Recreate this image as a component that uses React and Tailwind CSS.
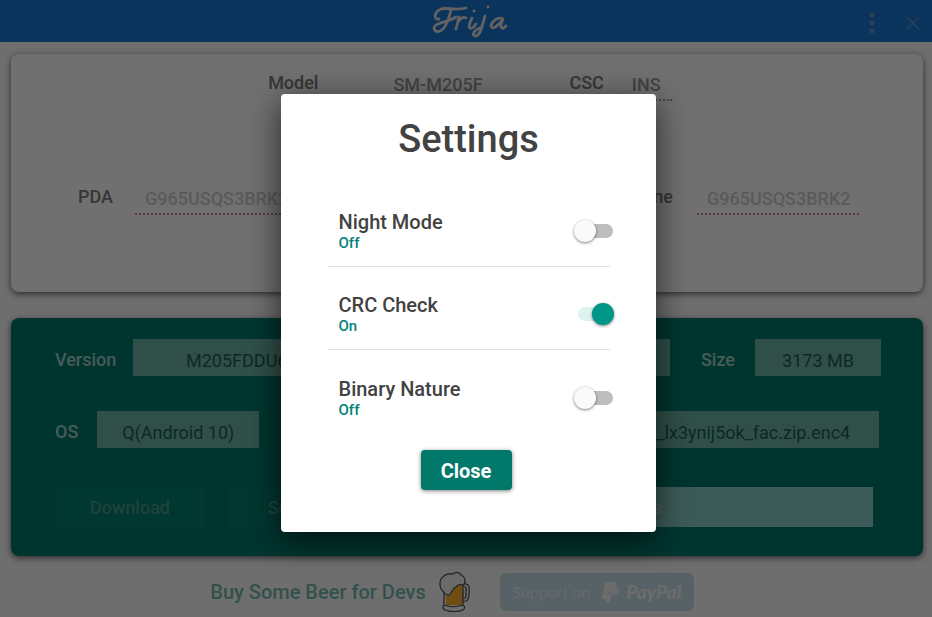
import { useState } from "react";

function Field({ id, label, value, className = "", inputClass, labelClass = "", ...rest }) {
  return (
    <div className={"flex items-center " + className}>
      <label htmlFor={id} className={"text-lg font-medium " + labelClass}>{label}</label>
      <input id={id} defaultValue={value} className={"min-w-0 text-lg outline-none " + inputClass} {...rest} />
    </div>
  );
}

const dashed = "h-9 border-b-2 border-dotted bg-transparent pt-1 font-medium";
const box = "h-[37px] bg-[#6db4a6] pt-1.5 text-center text-[#1c5f55]";

function Setting({ id, title, on, onToggle, last }) {
  return (
    <div className={"flex h-[83px] items-center justify-between pt-3 pl-[11px] " + (last ? "" : "border-b border-[#e0e0e0]")}>
      <label htmlFor={id} className="flex flex-col text-xl leading-6 font-medium text-[#424242]">
        {title}
        <span className="text-[15px] leading-[18px] text-[#00847a]">{on ? "On" : "Off"}</span>
      </label>
      <span className="relative -mr-1 h-[22px] w-10">
        <input id={id} type="checkbox" role="switch" checked={on} onChange={onToggle} className="peer absolute inset-0 z-10 cursor-pointer opacity-0" />
        <span className="absolute top-1 left-1 h-[14px] w-[35px] rounded-full bg-[#bdbdbd] peer-checked:bg-[#dcf3ef]" />
        <span className="absolute top-0 left-0 size-[22px] rounded-full bg-[#fafafa] shadow-[0_1px_3px_rgba(0,0,0,0.5)] peer-checked:left-[18px] peer-checked:bg-[#009688]" />
      </span>
    </div>
  );
}

function Logo() {
  return (
    <svg viewBox="0 0 84 38" className="h-[38px] w-[84px]" fill="none" stroke="#e0e0e0" strokeWidth="2.8" strokeLinecap="round" strokeLinejoin="round" aria-label="Frija" role="img">
      <path d="M11 17C5 18 6 10 13 7C19 5 28 9 38 6M23 8C21 16 18 27 12 29C7 31 4 26 8 23C12 20 20 20 28 15" />
      <path d="M31 15L28 27M30 20C32 17 35 14 38 16M44 16C42 20 40 25 42 26C44 27 46 25 48 22M46 9V9.2M57 14C54 23 53 33 48 34C43 34 45 28 54 25M60 5V5.2" />
      <path d="M75 17C70 14 63 20 63 24C64 29 71 23 75 17C73 21 72 25 74 26C76 27 77 25 78 24" />
    </svg>
  );
}

function Beer() {
  return (
    <svg viewBox="0 0 36 42" className="h-[42px] w-9" fill="none" stroke="#4a4a55" strokeWidth="1.2" strokeLinejoin="round">
      <path d="M26 13C33 12 31 19 31 23C31 29 29 31 25 30M26 16C29 15 28 19 28 22C28 26 28 28 25 27" fill="#f0f0f0" />
      <path d="M8 14H25V34H8Z" fill="#fbb12b" stroke="none" />
      <path d="M6 18V34C4 35 5 38 7 39C12 41 21 41 25 39C27 38 27 35 25 34V12M6 34C11 36 19 36 25 34" />
      <path d="M5 20C1 17 1 8 5 6C8 2 13 3 15 3C18 0 22 2 23 4C28 6 28 12 25 14C21 13 19 14 18 16C14 17 13 25 10 24C7 24 6 22 5 20Z" fill="#f2f2f2" />
    </svg>
  );
}

export default function App() {
  const [settings, setSettings] = useState({ night: false, crc: true, binary: false });
  const toggle = (key) => () => setSettings((s) => ({ ...s, [key]: !s[key] }));
  const card = "h-[238px] rounded-lg shadow-[0_2px_6px_rgba(0,0,0,0.6)]";
  const onTeal = "pt-1 text-[#a3cfc8]";
  return (
    <div className="relative min-h-screen overflow-hidden bg-[#fafafa] font-['Roboto',sans-serif]">
      <header className="grid h-[42px] grid-cols-[1fr_auto_1fr] items-center bg-[#1976d2] pl-2">
        <span />
        <Logo />
        <div className="flex items-center justify-end gap-[30px] pr-[11px] text-[#5f93cb]">
          <button aria-label="Menu" className="pt-1">
            <svg viewBox="0 0 6 22" className="h-[22px] w-[6px]" fill="currentColor"><circle cx="3" cy="3" r="2.5" /><circle cx="3" cy="11" r="2.5" /><circle cx="3" cy="19" r="2.5" /></svg>
          </button>
          <button aria-label="Close window" className="pt-1">
            <svg viewBox="0 0 16 16" className="size-4" stroke="currentColor" strokeWidth="1.7"><path d="M2 2L14 14M14 2L2 14" /></svg>
          </button>
        </div>
      </header>

      <main className="pt-3 pr-[9px] pl-[11px]">
        <section className={card + " bg-white pt-[11px] text-[#7c7c7c]"}>
          <div className="flex justify-center gap-[71px] pl-1.5">
            <Field id="model" label="Model" value="SM-M205F" inputClass={dashed + " ml-16 w-[116px] border-[#9a9a9a] pl-[11px] text-[#9a9a9a]"} />
            <Field id="csc" label="CSC" value="INS" inputClass={dashed + " ml-4 w-[52px] border-[#9a9a9a] pl-3 text-[#9a9a9a]"} />
          </div>
          <div className="mt-[78px] flex justify-between pr-16 pl-[67px]">
            <Field id="pda" label="PDA" placeholder="G965USQS3BRK2" inputClass={dashed + " ml-[22px] w-[162px] border-[#cf8585] pl-2.5 placeholder:text-[#cecece]"} />
            <Field id="phone" label="Phone" placeholder="G965USQS3BRK2" inputClass={dashed + " ml-6 w-[162px] border-[#cf8585] pl-2.5 placeholder:text-[#cecece]"} />
          </div>
        </section>

        <section className={card + " mt-[26px] bg-[#00796b] pt-[21px] pr-[42px] pl-11"}>
          <div className="flex gap-[31px]">
            <Field id="version" label="Version" value="M205FDDU6CTH2/M205FODM6CTH2/M205FDDU6CTH2" className="flex-1" labelClass={onTeal} inputClass={box + " ml-[17px] flex-1 pr-1 pl-8"} />
            <Field id="size" label="Size" value="3173 MB" labelClass={onTeal} inputClass={box + " ml-5 w-[126px]"} />
          </div>
          <div className="mt-[35px] flex justify-between pr-0.5">
            <Field id="os" label="OS" value="Q(Android 10)" labelClass={onTeal} inputClass={box + " ml-[19px] w-[162px]"} />
            <Field id="file" label="File" value="SM-M205F_1_20200914_lx3ynij5ok_fac.zip.enc4" labelClass={onTeal} inputClass={box + " ml-5 w-[430px] pr-4"} />
          </div>
          <div className="mt-[39px] flex gap-6 pr-2">
            <button className="h-10 w-[150px] bg-[#007d6f] pt-0.5 text-lg font-medium text-[#4a978c]">Download</button>
            <button className="h-10 w-[150px] bg-[#007d6f] pt-0.5 pr-1.5 text-lg font-medium text-[#4a978c]">Settings</button>
            <div role="status" className="flex flex-1 items-center justify-center bg-[#88cdc6] pt-0.5 pr-6 text-lg font-medium text-[#b4dcd7]">Progress</div>
          </div>
        </section>

        <footer className="mt-[15px] flex items-center justify-center gap-3 pr-[30px]">
          <span className="text-xl font-medium text-[#73b8ad]">Buy Some Beer for Devs</span>
          <Beer />
          <a href="#paypal" className="ml-3.5 flex h-[38px] w-[194px] items-center justify-center rounded-md bg-[#c3dfe8] font-['Lato',sans-serif] text-[#eeeef8]">
            Support on
            <svg viewBox="0 0 18 20" className="mr-1.5 ml-3 h-5 w-[18px]" fill="#f6f6f6"><path d="M3 0H10C15 0 16 4 14 8C13 10 10 11 6 11L5 17H0Z" /><path d="M16 5C19 10 15 13 9 13L8 20H4L5 15L7 12C12 12 15 9 16 5Z" /></svg>
            <b className="text-[19px] font-black text-[#f6f6f6] italic">PayPal</b>
          </a>
        </footer>
      </main>

      <div className="absolute inset-0 flex items-start justify-center bg-black/56 pt-[94px] pl-1">
        <div role="dialog" aria-modal="true" aria-labelledby="title" className="w-[375px] rounded bg-white pt-5 pr-[46px] pb-[42px] pl-[47px] shadow-[0_8px_32px_rgba(0,0,0,0.65)]">
          <h1 id="title" className="text-center text-[38px] leading-[50px] font-medium text-[#424242]">Settings</h1>
          <div className="mt-5">
            <Setting id="night" title="Night Mode" on={settings.night} onToggle={toggle("night")} />
            <Setting id="crc" title="CRC Check" on={settings.crc} onToggle={toggle("crc")} />
            <Setting id="binary" title="Binary Nature" on={settings.binary} onToggle={toggle("binary")} last />
          </div>
          <button className="mr-auto ml-[93px] mt-[17px] block h-10 w-[91px] rounded-sm bg-[#00796b] pt-0.5 text-xl font-bold text-white shadow-[0_1px_4px_rgba(0,0,0,0.5)]">Close</button>
        </div>
      </div>
    </div>
  );
}
